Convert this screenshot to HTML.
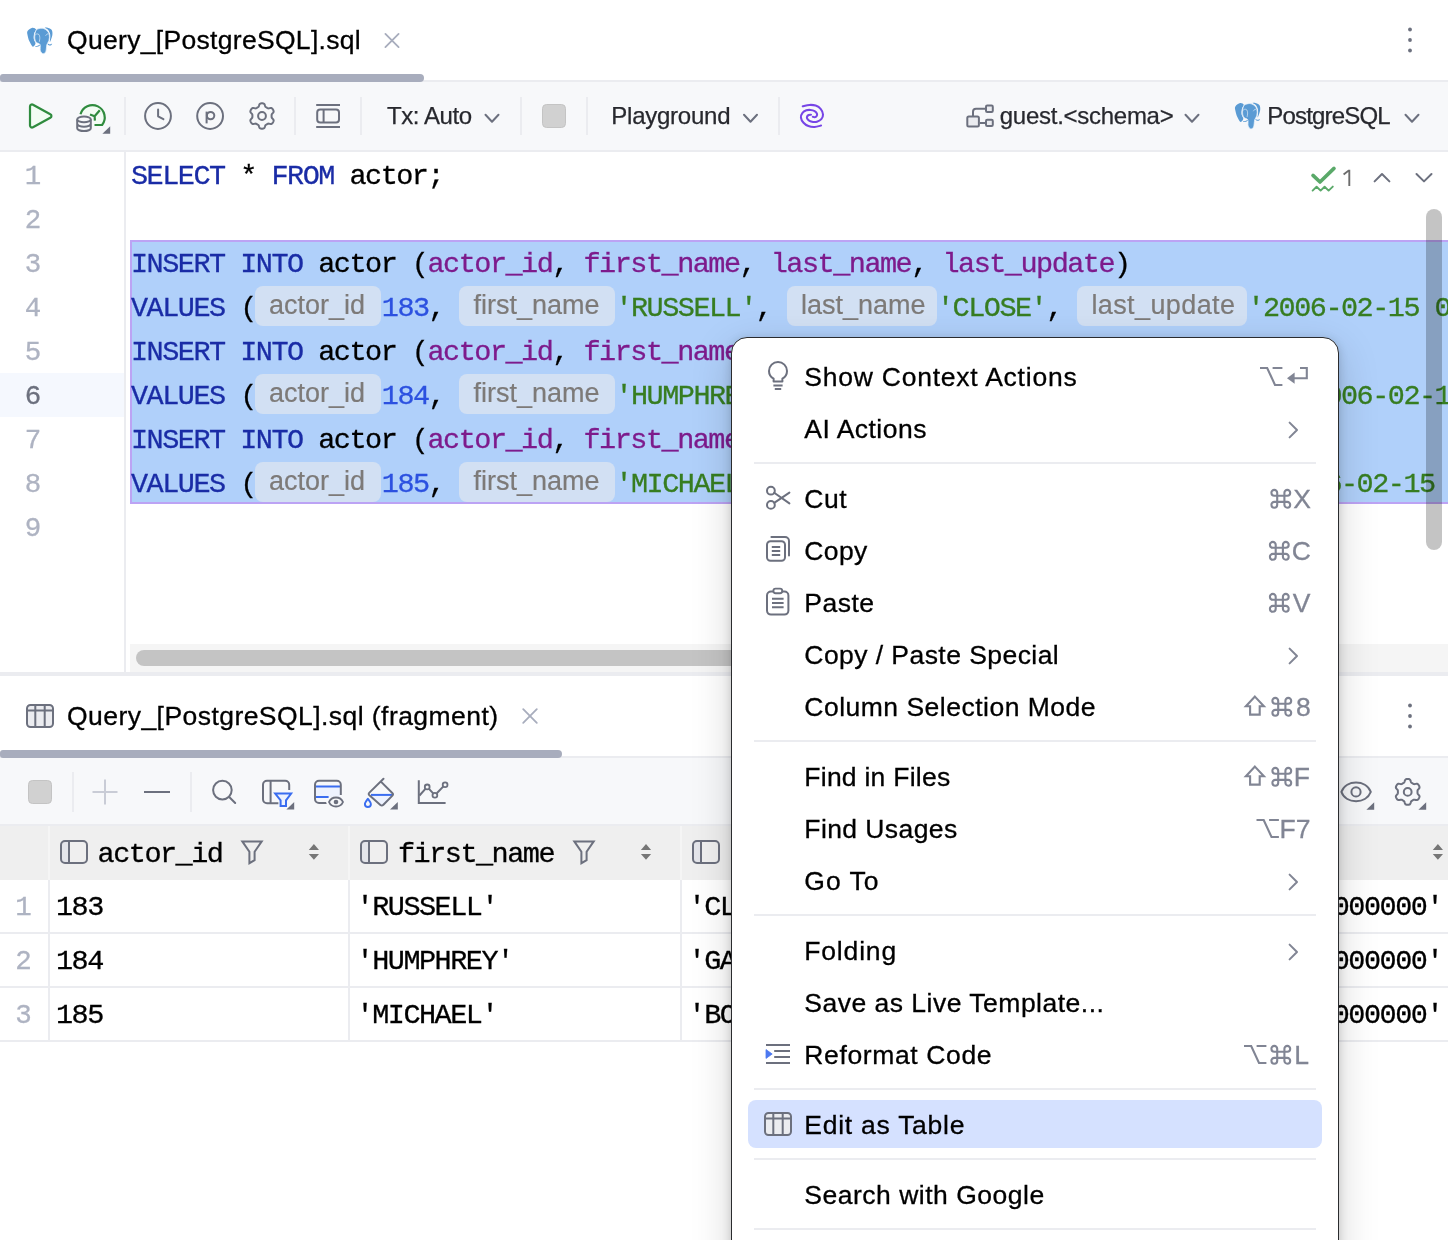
<!DOCTYPE html>
<html>
<head>
<meta charset="utf-8">
<title>Query_[PostgreSQL].sql</title>
<style>
*{box-sizing:border-box;margin:0;padding:0}
html,body{width:1448px;height:1240px;overflow:hidden;background:#fff}
body{position:relative;font-family:"Liberation Sans",sans-serif;color:#000}
#root{position:absolute;left:0;top:0;width:1448px;height:1240px;overflow:hidden;will-change:transform;background:#fff}
.abs{position:absolute}
.ui{position:absolute;-webkit-text-stroke:.3px currentColor;font-family:"Liberation Sans",sans-serif;font-size:26.5px;line-height:30px;white-space:pre;color:#000}
.tb{position:absolute;-webkit-text-stroke:.25px currentColor;font-family:"Liberation Sans",sans-serif;font-size:24px;line-height:30px;white-space:pre;color:#27282e}
.mono{font-family:"Liberation Mono",monospace;font-size:28.5px;letter-spacing:-1.5px;white-space:pre;-webkit-text-stroke:.3px currentColor}
svg{position:absolute;overflow:visible}
.sepv{position:absolute;width:2px;background:#ebecf0}
/* editor */
.ln{position:absolute;left:0;width:56px;text-align:center;height:44px;line-height:44px;color:#aeb3c2}
.cl{position:absolute;left:131px;height:44px;line-height:44px;color:#000}
.k{color:#1a2ca6}.c{color:#7d1b8c}.s{color:#377d21}.n{color:#2c51e0}
.h{position:absolute;top:-1px;height:40px;border-radius:8px;background:#d2e0f3;color:#7d7a78;font-family:"Liberation Sans",sans-serif;font-size:27px;line-height:38px;letter-spacing:0;white-space:pre;-webkit-text-stroke:.2px currentColor}
.h span{position:absolute;left:14px;top:0}
.seg{position:absolute;top:0;height:44px;line-height:44px}
/* menu */
#menu{position:absolute;left:731px;top:337px;width:608px;height:940px;background:#fff;border:1px solid #2a2b2e;border-radius:16px;box-shadow:0 2px 10px rgba(0,0,0,.17),0 12px 40px rgba(0,0,0,.17)}
.mi{position:absolute;left:72.3px;height:52px;line-height:52px;font-size:26.5px;-webkit-text-stroke:.3px currentColor;white-space:pre;color:#000}
.msep{position:absolute;left:22px;width:562px;height:2px;background:#ebecf0}
/* table */
.th{position:absolute;top:839px;height:32px;line-height:32px;color:#000}
.td{position:absolute;height:54px;line-height:54px;color:#000}
.rn{position:absolute;left:-1px;width:48px;text-align:center;height:54px;line-height:54px;color:#aeb3c2}
</style>
</head>
<body>
<div id="root">
<!-- ===== TAB BAR 1 ===== -->
<div class="abs" style="left:0;top:0;width:1448px;height:80px;background:#fff"></div>
<div class="abs" style="left:0;top:80px;width:1448px;height:2px;background:#ebecf0"></div>
<div class="abs" style="left:0;top:74px;width:424px;height:8px;background:#a8adbd;border-radius:3px 4px 4px 3px"></div>
<div class="ui" id="tab1" style="left:67.1px;top:25px;letter-spacing:0.304px">Query_[PostgreSQL].sql</div>
<!--ICONS-TAB1-->

<!-- ===== TOOLBAR 1 ===== -->
<div class="abs" style="left:0;top:82px;width:1448px;height:68px;background:#f7f8fa"></div>
<div class="abs" style="left:0;top:150px;width:1448px;height:2px;background:#ebecf0"></div>
<div class="sepv" style="left:124px;top:97px;height:38px"></div>
<div class="sepv" style="left:294px;top:97px;height:38px"></div>
<div class="sepv" style="left:360px;top:97px;height:38px"></div>
<div class="sepv" style="left:520px;top:97px;height:38px"></div>
<div class="sepv" style="left:586px;top:97px;height:38px"></div>
<div class="sepv" style="left:778px;top:97px;height:38px"></div>
<div class="tb" id="tx" style="left:387.0px;top:101px;letter-spacing:-0.43px">Tx: Auto</div>
<div class="tb" id="pg" style="left:611.3px;top:101px;letter-spacing:-0.244px">Playground</div>
<div class="tb" id="gs" style="left:999.8px;top:101px;letter-spacing:-0.273px">guest.&lt;schema&gt;</div>
<div class="tb" id="ps" style="left:1267.3px;top:101px;letter-spacing:-0.83px">PostgreSQL</div>

<!-- ===== EDITOR ===== -->
<div class="abs" style="left:0;top:152px;width:1448px;height:520px;background:#fff"></div>
<div class="abs" style="left:0;top:373px;width:124px;height:44px;background:#f5f8fe"></div>
<div class="abs" style="left:124px;top:152px;width:2px;height:520px;background:#ebecf0"></div>
<!-- selection -->
<div class="abs" style="left:130px;top:240px;width:1330px;height:264px;background:#b0d0fa;border:2px solid #bca3f4;border-right:none"></div>
<div class="ln mono" style="top:155px;left:4.5px;font-size:27.5px;letter-spacing:-.9px;color:#aeb3c2">1</div>
<div class="ln mono" style="top:199px;left:4.5px;font-size:27.5px;letter-spacing:-.9px;color:#aeb3c2">2</div>
<div class="ln mono" style="top:243px;left:4.5px;font-size:27.5px;letter-spacing:-.9px;color:#aeb3c2">3</div>
<div class="ln mono" style="top:287px;left:4.5px;font-size:27.5px;letter-spacing:-.9px;color:#aeb3c2">4</div>
<div class="ln mono" style="top:331px;left:4.5px;font-size:27.5px;letter-spacing:-.9px;color:#aeb3c2">5</div>
<div class="ln mono" style="top:375px;left:4.5px;font-size:27.5px;letter-spacing:-.9px;color:#6c707e">6</div>
<div class="ln mono" style="top:419px;left:4.5px;font-size:27.5px;letter-spacing:-.9px;color:#aeb3c2">7</div>
<div class="ln mono" style="top:463px;left:4.5px;font-size:27.5px;letter-spacing:-.9px;color:#aeb3c2">8</div>
<div class="ln mono" style="top:507px;left:4.5px;font-size:27.5px;letter-spacing:-.9px;color:#aeb3c2">9</div>
<div class="cl mono" style="top:155px"><span class="k">SELECT</span> * <span class="k">FROM</span> actor;</div>
<div class="cl mono" style="top:243px"><span class="k">INSERT INTO</span> actor (<span class="c">actor_id</span>, <span class="c">first_name</span>, <span class="c">last_name</span>, <span class="c">last_update</span>)</div>
<div class="cl mono" style="top:331px"><span class="k">INSERT INTO</span> actor (<span class="c">actor_id</span>, <span class="c">first_name</span>, <span class="c">last_name</span>, <span class="c">last_update</span>)</div>
<div class="cl mono" style="top:419px"><span class="k">INSERT INTO</span> actor (<span class="c">actor_id</span>, <span class="c">first_name</span>, <span class="c">last_name</span>, <span class="c">last_update</span>)</div>
<div class="cl mono" style="top:287px;width:1400px"><div class="seg" style="left:0.0px"><span class="k">VALUES</span> (</div><div class="h" style="left:124.0px;width:126px"><span>actor_id</span></div><div class="seg" style="left:250.8px"><span class="n">183</span>, </div><div class="h" style="left:328.4px;width:155.6px"><span>first_name</span></div><div class="seg" style="left:484.4px"><span class="s">'RUSSELL'</span>, </div><div class="h" style="left:656.0px;width:150px"><span>last_name</span></div><div class="seg" style="left:806.0px"><span class="s">'CLOSE'</span>, </div><div class="h" style="left:946.4px;width:170px"><span style="letter-spacing:.4px">last_update</span></div><div class="seg" style="left:1116.4px"><span class="s">'2006-02-15 04:34:33.000000'</span>);</div></div>
<div class="cl mono" style="top:375px;width:1400px"><div class="seg" style="left:0.0px"><span class="k">VALUES</span> (</div><div class="h" style="left:124.0px;width:126px"><span>actor_id</span></div><div class="seg" style="left:250.8px"><span class="n">184</span>, </div><div class="h" style="left:328.4px;width:155.6px"><span>first_name</span></div><div class="seg" style="left:484.4px"><span class="s">'HUMPHREY'</span>, </div><div class="h" style="left:671.6px;width:150px"><span>last_name</span></div><div class="seg" style="left:821.6px"><span class="s">'GARCIA'</span>, </div><div class="h" style="left:993.2px;width:170px"><span style="letter-spacing:.4px">last_update</span></div><div class="seg" style="left:1163.2px"><span class="s">'2006-02-15 04:34:33.000000'</span>);</div></div>
<div class="cl mono" style="top:463px;width:1400px"><div class="seg" style="left:0.0px"><span class="k">VALUES</span> (</div><div class="h" style="left:124.0px;width:126px"><span>actor_id</span></div><div class="seg" style="left:250.8px"><span class="n">185</span>, </div><div class="h" style="left:328.4px;width:155.6px"><span>first_name</span></div><div class="seg" style="left:484.4px"><span class="s">'MICHAEL'</span>, </div><div class="h" style="left:656.0px;width:150px"><span>last_name</span></div><div class="seg" style="left:806.0px"><span class="s">'BOLGER'</span>, </div><div class="h" style="left:962.0px;width:170px"><span style="letter-spacing:.4px">last_update</span></div><div class="seg" style="left:1132.0px"><span class="s">'2006-02-15 04:34:33.000000'</span>);</div></div>

<!-- h scrollbar -->
<div class="abs" style="left:130px;top:644px;width:1318px;height:28px;background:#f5f5f5"></div>
<div class="abs" style="left:136px;top:650px;width:900px;height:16px;background:#c4c4c4;border-radius:8px"></div>
<!-- v scrollbar -->
<div class="abs" style="left:1426px;top:209px;width:16px;height:341px;background:rgba(0,0,0,.23);border-radius:8px"></div>

<!-- ===== SPLIT + TAB BAR 2 ===== -->
<div class="abs" style="left:0;top:672px;width:1448px;height:4px;background:#ebecf0"></div>
<div class="abs" style="left:0;top:676px;width:1448px;height:80px;background:#fff"></div>
<div class="abs" style="left:0;top:756px;width:1448px;height:2px;background:#ebecf0"></div>
<div class="abs" style="left:0;top:750px;width:562px;height:8px;background:#a8adbd;border-radius:3px 4px 4px 3px"></div>
<div class="ui" id="tab2" style="left:67.0px;top:701px;letter-spacing:0.446px">Query_[PostgreSQL].sql (fragment)</div>
<!--ICONS-TAB2-->

<!-- ===== TOOLBAR 2 ===== -->
<div class="abs" style="left:0;top:758px;width:1448px;height:66px;background:#f7f8fa"></div>
<div class="abs" style="left:0;top:824px;width:1448px;height:2px;background:#ebecf0"></div>
<div class="sepv" style="left:72px;top:772px;height:40px"></div>
<div class="sepv" style="left:190px;top:772px;height:40px"></div>
<!--ICONS-TB2-->

<!-- ===== TABLE ===== -->
<div class="abs" style="left:0;top:826px;width:1448px;height:54px;background:#efefef"></div>
<div class="abs" style="left:0;top:880px;width:1448px;height:360px;background:#fff"></div>
<div class="abs" style="left:0;top:932px;width:1448px;height:2px;background:#ebecf0"></div>
<div class="abs" style="left:0;top:986px;width:1448px;height:2px;background:#ebecf0"></div>
<div class="abs" style="left:0;top:1040px;width:1448px;height:2px;background:#ebecf0"></div>
<div class="abs" style="left:48px;top:826px;width:2px;height:54px;background:#f5f5f5"></div>
<div class="abs" style="left:348px;top:826px;width:2px;height:54px;background:#f5f5f5"></div>
<div class="abs" style="left:680px;top:826px;width:2px;height:54px;background:#f5f5f5"></div>
<div class="abs" style="left:48px;top:880px;width:2px;height:162px;background:#ebecf0"></div>
<div class="abs" style="left:348px;top:880px;width:2px;height:162px;background:#ebecf0"></div>
<div class="abs" style="left:680px;top:880px;width:2px;height:162px;background:#ebecf0"></div>
<div class="th mono" style="left:97.6px">actor_id</div>
<div class="th mono" style="left:398px">first_name</div>
<div class="th mono" style="left:730px">last_name</div>
<div class="rn mono" style="top:881px;font-size:27.5px;letter-spacing:-.9px">1</div>
<div class="td mono" style="left:56px;top:881px">183</div>
<div class="td mono" style="left:356.6px;top:881px">'RUSSELL'</div>
<div class="td mono" style="left:688.6px;top:881px">'CLOSE'</div>
<div class="td mono" style="right:6px;top:881px">'2006-02-15 04:34:33.000000'</div>
<div class="rn mono" style="top:935px;font-size:27.5px;letter-spacing:-.9px">2</div>
<div class="td mono" style="left:56px;top:935px">184</div>
<div class="td mono" style="left:356.6px;top:935px">'HUMPHREY'</div>
<div class="td mono" style="left:688.6px;top:935px">'GARCIA'</div>
<div class="td mono" style="right:6px;top:935px">'2006-02-15 04:34:33.000000'</div>
<div class="rn mono" style="top:989px;font-size:27.5px;letter-spacing:-.9px">3</div>
<div class="td mono" style="left:56px;top:989px">185</div>
<div class="td mono" style="left:356.6px;top:989px">'MICHAEL'</div>
<div class="td mono" style="left:688.6px;top:989px">'BOLGER'</div>
<div class="td mono" style="right:6px;top:989px">'2006-02-15 04:34:33.000000'</div>
<!--ICONS-START--><svg id="icons" width="1448" height="1240" viewBox="0 0 1448 1240" style="left:0;top:0">
<g transform="translate(27.6,27.6)">
<path d="M4.79 0.21 C3.38 0.47 0.76 2.26 -0.04 3.50 C-0.85 4.73 -0.33 5.97 -0.04 7.64 C0.25 9.31 0.82 11.61 1.69 13.51 C2.55 15.41 4.10 18.63 5.14 19.03 C6.17 19.44 7.73 17.19 7.90 15.93 C8.07 14.66 6.40 13.11 6.17 11.44 C5.94 9.77 6.15 7.49 6.52 5.91 C6.89 4.33 8.71 2.89 8.42 1.94 C8.13 0.99 6.20 -0.04 4.79 0.21Z" fill="#5a9bd4"/>
<path d="M17.22 0.11 C17.28 -0.18 19.53 -0.00 20.68 0.39 C21.83 0.78 23.44 1.42 24.13 2.46 C24.82 3.50 24.91 5.11 24.82 6.60 C24.73 8.10 24.04 10.11 23.61 11.44 C23.18 12.76 22.39 14.89 22.23 14.54 C22.08 14.20 22.66 10.80 22.68 9.37 C22.70 7.93 22.73 7.12 22.33 5.91 C21.94 4.70 21.18 3.08 20.33 2.11 C19.48 1.15 17.17 0.40 17.22 0.11Z" fill="#5a9bd4"/>
<path d="M13.08 0.73 C11.93 0.93 9.92 1.14 8.94 2.11 C7.96 3.09 7.56 5.05 7.21 6.60 C6.87 8.16 6.58 10.06 6.87 11.44 C7.15 12.82 8.02 13.97 8.94 14.89 C9.86 15.81 11.76 15.58 12.39 16.96 C13.02 18.34 12.22 21.65 12.74 23.18 C13.25 24.70 14.58 26.00 15.50 26.11 C16.42 26.23 17.63 25.39 18.26 23.87 C18.89 22.34 18.78 18.80 19.30 16.96 C19.81 15.12 20.97 14.49 21.37 12.82 C21.77 11.15 22.06 8.62 21.71 6.95 C21.37 5.28 20.27 3.81 19.30 2.80 C18.32 1.80 16.88 1.25 15.84 0.91 C14.81 0.56 14.23 0.53 13.08 0.73Z" fill="#5a9bd4" stroke="#e9f2fb" stroke-width="0.8"/>
<path d="M7.73 18.52 C8.04 18.34 9.27 18.31 9.97 18.07 C10.68 17.82 11.60 17.07 11.98 17.03 C12.35 16.99 12.49 17.50 12.22 17.83 C11.94 18.15 11.01 18.75 10.32 18.96 C9.63 19.18 8.51 19.18 8.07 19.10 C7.64 19.03 7.41 18.69 7.73 18.52Z" fill="#5a9bd4"/>
<path d="M20.26 16.00 C20.57 15.97 21.52 16.85 22.23 16.89 C22.94 16.94 24.31 16.16 24.54 16.27 C24.77 16.39 24.06 17.31 23.61 17.58 C23.17 17.86 22.42 18.02 21.89 17.93 C21.35 17.84 20.67 17.35 20.40 17.03 C20.13 16.71 19.96 16.02 20.26 16.00Z" fill="#5a9bd4"/>
<path d="M7.56 13.51 C7.50 12.65 6.98 9.51 7.21 8.33 C7.44 7.15 8.25 6.66 8.94 6.43 C9.63 6.20 10.81 6.34 11.35 6.95 C11.90 7.55 12.16 8.85 12.22 10.06 C12.27 11.26 11.79 13.51 11.70 14.20" fill="none" stroke="#dbe9f7" stroke-width="0.7"/>
<path d="M17.91 8.33 C18.20 7.98 19.15 6.43 19.64 6.26 C20.13 6.08 20.65 7.12 20.85 7.29" fill="none" stroke="#dbe9f7" stroke-width="0.7"/>
</g>
<path d="M385.4 33.9 L398.6 47.1 M398.6 33.9 L385.4 47.1" stroke="#a8adbd" stroke-width="1.8" stroke-linecap="round" fill="none"/>
<circle cx="1410" cy="29.5" r="1.9" fill="#6c707e"/><circle cx="1410" cy="40" r="1.9" fill="#6c707e"/><circle cx="1410" cy="50.5" r="1.9" fill="#6c707e"/>
<path d="M30 106.4 A2 2 0 0 1 33 104.7 L50.3 114.2 A2 2 0 0 1 50.3 117.8 L33 127.3 A2 2 0 0 1 30 125.6 Z" fill="#f2fcf3" stroke="#2f8b3e" stroke-width="2.2" stroke-linejoin="round"/>
<path d="M80.5 114.3 A12.3 12.3 0 1 1 102.07 125 H94.5 V116 Z" fill="#f2fcf3"/>
<path d="M80.5 114.3 A12.3 12.3 0 1 1 102.07 125 H94.5" fill="none" stroke="#2f8b3e" stroke-width="2.2" stroke-linecap="butt"/>
<path d="M99.8 110.3 L94.6 116.2 M90 114.4 L94.6 116.2 L94.9 120.6" fill="none" stroke="#2f8b3e" stroke-width="2.2" stroke-linecap="butt"/>
<path d="M75.2 119 v10 a8.8 4.2 0 0 0 17.6 0 v-10 a8.8 4.2 0 0 0 -17.6 0z" fill="#f7f8fa"/>
<ellipse cx="84" cy="119.4" rx="6.8" ry="2.9" fill="#f7f8fa" stroke="#6c707e" stroke-width="2"/><path d="M77.2 119.4 V128.2 A6.8 2.9 0 0 0 90.8 128.2 V119.4 M77.2 123.8 A6.8 2.9 0 0 0 90.8 123.8" fill="none" stroke="#6c707e" stroke-width="2"/>
<path d="M110.2 133.8 h-7.8 l7.8 -7.6z" fill="#6c707e"/>
<circle cx="158" cy="116" r="12.9" fill="none" stroke="#6c707e" stroke-width="2"/><path d="M158.1 109.6 V116.3 L163.4 119.2" fill="none" stroke="#6c707e" stroke-width="2" stroke-linecap="round" stroke-linejoin="round"/>
<circle cx="210.1" cy="116" r="12.9" fill="none" stroke="#6c707e" stroke-width="2"/><circle cx="210.6" cy="115.6" r="3.7" fill="none" stroke="#6c707e" stroke-width="2"/><path d="M206.6 111.6 V123.4" stroke="#6c707e" stroke-width="2" stroke-linecap="butt"/>
<path d="M271.60 116.00 L271.60 116.42 L271.60 116.84 L271.64 117.27 L271.77 117.72 L272.14 118.25 L272.77 118.89 L273.36 119.58 L273.63 120.23 L273.62 120.81 L273.47 121.35 L273.26 121.86 L273.00 122.35 L272.70 122.82 L272.37 123.26 L271.98 123.66 L271.48 123.95 L270.78 124.05 L269.88 123.88 L269.02 123.66 L268.38 123.60 L267.92 123.71 L267.53 123.90 L267.16 124.10 L266.80 124.31 L266.44 124.52 L266.07 124.74 L265.72 124.98 L265.39 125.33 L265.12 125.90 L264.89 126.77 L264.58 127.63 L264.15 128.19 L263.64 128.47 L263.10 128.61 L262.55 128.68 L262.00 128.70 L261.45 128.68 L260.90 128.61 L260.36 128.47 L259.85 128.19 L259.42 127.63 L259.11 126.77 L258.88 125.90 L258.61 125.33 L258.28 124.98 L257.93 124.74 L257.56 124.52 L257.20 124.31 L256.84 124.10 L256.47 123.90 L256.08 123.71 L255.62 123.60 L254.98 123.66 L254.12 123.88 L253.22 124.05 L252.52 123.95 L252.02 123.66 L251.63 123.26 L251.30 122.82 L251.00 122.35 L250.74 121.86 L250.53 121.35 L250.38 120.81 L250.37 120.23 L250.64 119.58 L251.23 118.89 L251.86 118.25 L252.23 117.72 L252.36 117.27 L252.40 116.84 L252.40 116.42 L252.40 116.00 L252.40 115.58 L252.40 115.16 L252.36 114.73 L252.23 114.28 L251.86 113.75 L251.23 113.11 L250.64 112.42 L250.37 111.77 L250.38 111.19 L250.53 110.65 L250.74 110.14 L251.00 109.65 L251.30 109.18 L251.63 108.74 L252.02 108.34 L252.52 108.05 L253.22 107.95 L254.12 108.12 L254.98 108.34 L255.62 108.40 L256.08 108.29 L256.47 108.10 L256.84 107.90 L257.20 107.69 L257.56 107.48 L257.93 107.26 L258.28 107.02 L258.61 106.67 L258.88 106.10 L259.11 105.23 L259.42 104.37 L259.85 103.81 L260.36 103.53 L260.90 103.39 L261.45 103.32 L262.00 103.30 L262.55 103.32 L263.10 103.39 L263.64 103.53 L264.15 103.81 L264.58 104.37 L264.89 105.23 L265.12 106.10 L265.39 106.67 L265.72 107.02 L266.07 107.26 L266.44 107.48 L266.80 107.69 L267.16 107.90 L267.53 108.10 L267.92 108.29 L268.38 108.40 L269.02 108.34 L269.88 108.12 L270.78 107.95 L271.48 108.05 L271.98 108.34 L272.37 108.74 L272.70 109.18 L273.00 109.65 L273.26 110.14 L273.47 110.65 L273.62 111.19 L273.63 111.77 L273.36 112.42 L272.77 113.11 L272.14 113.75 L271.77 114.28 L271.64 114.73 L271.60 115.16 L271.60 115.58Z" fill="none" stroke="#6c707e" stroke-width="2" stroke-linejoin="round"/><circle cx="262" cy="116" r="3.9" fill="none" stroke="#6c707e" stroke-width="2"/>
<path d="M316.2 105 H340 M316.2 126.9 H340" stroke="#6c707e" stroke-width="2"/><rect x="317.2" y="109.4" width="21.8" height="13.2" rx="3" fill="none" stroke="#6c707e" stroke-width="2"/><path d="M323.6 109.4 V122.6" stroke="#6c707e" stroke-width="2"/>
<path d="M485.5 114.7 L492 121.7 L498.5 114.7" fill="none" stroke="#6c707e" stroke-width="2" stroke-linecap="round" stroke-linejoin="round"/>
<rect x="542.5" y="104.5" width="23" height="23" rx="4" fill="#d1d1d1" stroke="#c4c4c4" stroke-width="1"/>
<path d="M744.0 114.7 L750.5 121.7 L757.0 114.7" fill="none" stroke="#6c707e" stroke-width="2" stroke-linecap="round" stroke-linejoin="round"/>
<path d="M802.74 106.20 C803.86 105.98 807.30 105.01 809.46 104.90 C811.61 104.80 813.76 104.86 815.65 105.55 C817.54 106.24 819.59 107.55 820.81 109.03 C822.04 110.52 822.92 112.78 823.01 114.46 C823.09 116.13 822.34 117.90 821.33 119.10 C820.32 120.31 818.32 121.21 816.94 121.68 C815.56 122.16 814.32 122.07 813.07 121.94 C811.82 121.81 810.44 121.47 809.46 120.91 C808.47 120.35 807.52 119.32 807.13 118.59 C806.74 117.85 806.87 117.12 807.13 116.52 C807.39 115.92 808.04 115.27 808.68 114.97 C809.33 114.67 810.62 114.76 811.00 114.71" fill="none" stroke="#7745e6" stroke-width="2.05" stroke-linecap="round" stroke-linejoin="round"/><path d="M821.07 125.55 C820.00 125.79 816.73 126.89 814.62 126.97 C812.51 127.06 810.27 126.78 808.42 126.07 C806.57 125.36 804.77 124.14 803.52 122.72 C802.27 121.30 801.11 119.19 800.94 117.55 C800.76 115.92 801.58 114.11 802.49 112.91 C803.39 111.70 805.02 110.82 806.36 110.33 C807.69 109.83 809.11 109.81 810.49 109.94 C811.86 110.07 813.54 110.48 814.62 111.10 C815.69 111.72 816.60 112.86 816.94 113.68 C817.29 114.50 817.07 115.40 816.68 116.00 C816.30 116.61 815.26 117.17 814.62 117.29 C813.97 117.42 813.11 116.86 812.81 116.78" fill="none" stroke="#7745e6" stroke-width="2.05" stroke-linecap="round" stroke-linejoin="round"/>
<path d="M985 108.8 H976 a3 3 0 0 0 -3 3 V116 M980 123 H985" fill="none" stroke="#6c707e" stroke-width="2"/>
<rect x="967.3" y="116.5" width="11.6" height="10" rx="1.5" fill="#ebecf0" stroke="#6c707e" stroke-width="2"/><rect x="986" y="105.6" width="6.8" height="6.4" rx="1.2" fill="#ebecf0" stroke="#6c707e" stroke-width="2"/><rect x="986" y="119.8" width="6.8" height="6.2" rx="1.2" fill="#ebecf0" stroke="#6c707e" stroke-width="2"/>
<path d="M1185.5 114.7 L1192 121.7 L1198.5 114.7" fill="none" stroke="#6c707e" stroke-width="2" stroke-linecap="round" stroke-linejoin="round"/>
<g transform="translate(1235.4,102.9)">
<path d="M4.79 0.21 C3.38 0.47 0.76 2.26 -0.04 3.50 C-0.85 4.73 -0.33 5.97 -0.04 7.64 C0.25 9.31 0.82 11.61 1.69 13.51 C2.55 15.41 4.10 18.63 5.14 19.03 C6.17 19.44 7.73 17.19 7.90 15.93 C8.07 14.66 6.40 13.11 6.17 11.44 C5.94 9.77 6.15 7.49 6.52 5.91 C6.89 4.33 8.71 2.89 8.42 1.94 C8.13 0.99 6.20 -0.04 4.79 0.21Z" fill="#5a9bd4"/>
<path d="M17.22 0.11 C17.28 -0.18 19.53 -0.00 20.68 0.39 C21.83 0.78 23.44 1.42 24.13 2.46 C24.82 3.50 24.91 5.11 24.82 6.60 C24.73 8.10 24.04 10.11 23.61 11.44 C23.18 12.76 22.39 14.89 22.23 14.54 C22.08 14.20 22.66 10.80 22.68 9.37 C22.70 7.93 22.73 7.12 22.33 5.91 C21.94 4.70 21.18 3.08 20.33 2.11 C19.48 1.15 17.17 0.40 17.22 0.11Z" fill="#5a9bd4"/>
<path d="M13.08 0.73 C11.93 0.93 9.92 1.14 8.94 2.11 C7.96 3.09 7.56 5.05 7.21 6.60 C6.87 8.16 6.58 10.06 6.87 11.44 C7.15 12.82 8.02 13.97 8.94 14.89 C9.86 15.81 11.76 15.58 12.39 16.96 C13.02 18.34 12.22 21.65 12.74 23.18 C13.25 24.70 14.58 26.00 15.50 26.11 C16.42 26.23 17.63 25.39 18.26 23.87 C18.89 22.34 18.78 18.80 19.30 16.96 C19.81 15.12 20.97 14.49 21.37 12.82 C21.77 11.15 22.06 8.62 21.71 6.95 C21.37 5.28 20.27 3.81 19.30 2.80 C18.32 1.80 16.88 1.25 15.84 0.91 C14.81 0.56 14.23 0.53 13.08 0.73Z" fill="#5a9bd4" stroke="#e9f2fb" stroke-width="0.8"/>
<path d="M7.73 18.52 C8.04 18.34 9.27 18.31 9.97 18.07 C10.68 17.82 11.60 17.07 11.98 17.03 C12.35 16.99 12.49 17.50 12.22 17.83 C11.94 18.15 11.01 18.75 10.32 18.96 C9.63 19.18 8.51 19.18 8.07 19.10 C7.64 19.03 7.41 18.69 7.73 18.52Z" fill="#5a9bd4"/>
<path d="M20.26 16.00 C20.57 15.97 21.52 16.85 22.23 16.89 C22.94 16.94 24.31 16.16 24.54 16.27 C24.77 16.39 24.06 17.31 23.61 17.58 C23.17 17.86 22.42 18.02 21.89 17.93 C21.35 17.84 20.67 17.35 20.40 17.03 C20.13 16.71 19.96 16.02 20.26 16.00Z" fill="#5a9bd4"/>
<path d="M7.56 13.51 C7.50 12.65 6.98 9.51 7.21 8.33 C7.44 7.15 8.25 6.66 8.94 6.43 C9.63 6.20 10.81 6.34 11.35 6.95 C11.90 7.55 12.16 8.85 12.22 10.06 C12.27 11.26 11.79 13.51 11.70 14.20" fill="none" stroke="#dbe9f7" stroke-width="0.7"/>
<path d="M17.91 8.33 C18.20 7.98 19.15 6.43 19.64 6.26 C20.13 6.08 20.65 7.12 20.85 7.29" fill="none" stroke="#dbe9f7" stroke-width="0.7"/>
</g>
<path d="M1405.5 114.7 L1412 121.7 L1418.5 114.7" fill="none" stroke="#6c707e" stroke-width="2" stroke-linecap="round" stroke-linejoin="round"/>
<path d="M1313 175.4 L1320 182 L1334 168.4" fill="none" stroke="#5aa969" stroke-width="3.6" stroke-linecap="round" stroke-linejoin="round"/>
<path d="M1312.6 190.6 L1316.6 186.8 L1320.6 190.6 L1324.6 186.8 L1328.6 190.6 L1332.8 186.6" fill="none" stroke="#5aa969" stroke-width="1.9" stroke-linecap="round" stroke-linejoin="round"/>
<path d="M1374.6 181.4 L1382 174 L1389.4 181.4" fill="none" stroke="#6c707e" stroke-width="2" stroke-linecap="round" stroke-linejoin="round"/>
<path d="M1416.5 174 L1424 181.4 L1431.5 174" fill="none" stroke="#6c707e" stroke-width="2" stroke-linecap="round" stroke-linejoin="round"/>
<path d="M1343.6 174.6 L1348.6 170.6 H1349.3 V186" fill="none" stroke="#6c6c6c" stroke-width="1.9" stroke-linejoin="miter"/>
<rect x="27" y="705" width="26" height="22" rx="3.5" fill="#ebecf0" stroke="#6c707e" stroke-width="2"/><path d="M27 710.5 H53 M35.3 705 V727 M44.7 705 V727" stroke="#6c707e" stroke-width="2" fill="none"/>
<path d="M523.2 709.2 L536.8 722.8 M536.8 709.2 L523.2 722.8" stroke="#a8adbd" stroke-width="1.8" stroke-linecap="round" fill="none"/>
<circle cx="1410" cy="705.5" r="1.9" fill="#6c707e"/><circle cx="1410" cy="716" r="1.9" fill="#6c707e"/><circle cx="1410" cy="726.5" r="1.9" fill="#6c707e"/>
<rect x="28.5" y="780.5" width="23" height="23" rx="4" fill="#d1d1d1" stroke="#c4c4c4" stroke-width="1"/>
<path d="M92.5 792 H117.5 M105 779.5 V804.5" stroke="#c9ccd6" stroke-width="2"/>
<path d="M144 792 H170" stroke="#6c707e" stroke-width="2"/>
<circle cx="222.4" cy="790.1" r="9.3" fill="none" stroke="#6c707e" stroke-width="2"/><path d="M229.2 797 L235.2 803" stroke="#6c707e" stroke-width="2" stroke-linecap="round"/>
<path d="M289.2 790 V784.8 A4 4 0 0 0 285.2 780.8 H267 A4 4 0 0 0 263 784.8 V799.2 A4 4 0 0 0 267 803.2 H278.4 M270.6 780.8 V803.2" fill="none" stroke="#6c707e" stroke-width="2"/>
<path d="M275.2 793.6 H291.1 L286 800.3 V806 H280.6 V800.3 Z" fill="#edf2fe" stroke="#3a6df0" stroke-width="2" stroke-linejoin="miter"/>
<path d="M294.2 809.6 h-7.8 l7.8 -7.6z" fill="#6c707e"/>
<rect x="316" y="786.6" width="24" height="10.5" fill="#edf2fe"/>
<path d="M316 786.6 H340 M316 797.1 H328.6" stroke="#3a6df0" stroke-width="2"/>
<path d="M340.8 795 V784.8 A4 4 0 0 0 336.8 780.8 H319 A4 4 0 0 0 315 784.8 V799 A4 4 0 0 0 319 803 H326.6" fill="none" stroke="#6c707e" stroke-width="2"/>
<path d="M326 802 C330 794.6 342 794.6 346 802 C342 809.4 330 809.4 326 802Z" fill="#f7f8fa"/>
<path d="M329 802 C331.6 795.9 340.4 795.9 343 802 C340.4 808.1 331.6 808.1 329 802Z" fill="#f7f8fa" stroke="#6c707e" stroke-width="1.9" stroke-linejoin="round"/><circle cx="336" cy="802" r="2.3" fill="#6c707e"/>
<path d="M370.6 794.9 H392 L383.4 804.2 Q381.9 805.6 380.4 804.3 Z" fill="#edf2fe"/>
<path d="M371 794.9 H392.3" stroke="#3a6df0" stroke-width="2"/>
<path d="M383.5 778.8 L369.4 792.6 Q368 794 369.4 795.3 L380.4 805 Q381.9 806.2 383.4 804.8 L392.4 795.6 Q393.6 794.3 392.3 793 L380.9 781.6" fill="none" stroke="#6c707e" stroke-width="2" stroke-linecap="round" stroke-linejoin="round"/>
<path d="M367.9 798.7 C366.2 801 364.9 802.6 364.9 804 A3 3 0 0 0 370.9 804 C370.9 802.6 369.6 801 367.9 798.7Z" fill="none" stroke="#3a6df0" stroke-width="1.9" stroke-linejoin="round"/>
<path d="M397.8 809.6 h-7.8 l7.8 -7.6z" fill="#6c707e"/>
<path d="M418.8 780.3 V803 H445.6" fill="none" stroke="#6c707e" stroke-width="2"/><path d="M419.5 795.5 L425.6 788.6 M429 788.8 L433.2 793.4 M436.8 793.2 L443.4 786.4" stroke="#6c707e" stroke-width="2"/><circle cx="427.2" cy="786.9" r="2.4" fill="none" stroke="#6c707e" stroke-width="1.8"/><circle cx="434.9" cy="795.2" r="2.4" fill="none" stroke="#6c707e" stroke-width="1.8"/><circle cx="445.1" cy="784.8" r="2.4" fill="none" stroke="#6c707e" stroke-width="1.8"/>
<path d="M1341.4 791.9 C1346 779.4 1366 779.4 1370.8 791.9 C1366 804.4 1346 804.4 1341.4 791.9Z" fill="none" stroke="#6c707e" stroke-width="2" stroke-linejoin="round"/><circle cx="1356" cy="791.9" r="4.6" fill="none" stroke="#6c707e" stroke-width="2"/>
<path d="M1374.2 809.8 h-7.8 l7.8 -7.6z" fill="#6c707e"/>
<path d="M1417.50 791.90 L1417.50 792.33 L1417.50 792.76 L1417.54 793.20 L1417.67 793.66 L1418.03 794.19 L1418.66 794.84 L1419.25 795.54 L1419.52 796.20 L1419.51 796.79 L1419.36 797.33 L1419.14 797.85 L1418.87 798.35 L1418.57 798.83 L1418.23 799.28 L1417.84 799.68 L1417.33 799.98 L1416.63 800.08 L1415.73 799.93 L1414.85 799.70 L1414.21 799.66 L1413.74 799.77 L1413.34 799.96 L1412.97 800.17 L1412.60 800.39 L1412.23 800.60 L1411.86 800.82 L1411.50 801.07 L1411.16 801.41 L1410.88 801.99 L1410.64 802.86 L1410.32 803.73 L1409.88 804.28 L1409.37 804.57 L1408.82 804.71 L1408.26 804.78 L1407.70 804.80 L1407.14 804.78 L1406.58 804.71 L1406.03 804.57 L1405.52 804.28 L1405.08 803.73 L1404.76 802.86 L1404.52 801.99 L1404.24 801.41 L1403.90 801.07 L1403.54 800.82 L1403.17 800.60 L1402.80 800.39 L1402.43 800.17 L1402.06 799.96 L1401.66 799.77 L1401.19 799.66 L1400.55 799.70 L1399.67 799.93 L1398.77 800.08 L1398.07 799.98 L1397.56 799.68 L1397.17 799.28 L1396.83 798.83 L1396.53 798.35 L1396.26 797.85 L1396.04 797.33 L1395.89 796.79 L1395.88 796.20 L1396.15 795.54 L1396.74 794.84 L1397.37 794.19 L1397.73 793.66 L1397.86 793.20 L1397.90 792.76 L1397.90 792.33 L1397.90 791.90 L1397.90 791.47 L1397.90 791.04 L1397.86 790.60 L1397.73 790.14 L1397.37 789.61 L1396.74 788.96 L1396.15 788.26 L1395.88 787.60 L1395.89 787.01 L1396.04 786.47 L1396.26 785.95 L1396.53 785.45 L1396.83 784.97 L1397.17 784.52 L1397.56 784.12 L1398.07 783.82 L1398.77 783.72 L1399.67 783.87 L1400.55 784.10 L1401.19 784.14 L1401.66 784.03 L1402.06 783.84 L1402.43 783.63 L1402.80 783.41 L1403.17 783.20 L1403.54 782.98 L1403.90 782.73 L1404.24 782.39 L1404.52 781.81 L1404.76 780.94 L1405.08 780.07 L1405.52 779.52 L1406.03 779.23 L1406.58 779.09 L1407.14 779.02 L1407.70 779.00 L1408.26 779.02 L1408.82 779.09 L1409.37 779.23 L1409.88 779.52 L1410.32 780.07 L1410.64 780.94 L1410.88 781.81 L1411.16 782.39 L1411.50 782.73 L1411.86 782.98 L1412.23 783.20 L1412.60 783.41 L1412.97 783.63 L1413.34 783.84 L1413.74 784.03 L1414.21 784.14 L1414.85 784.10 L1415.73 783.87 L1416.63 783.72 L1417.33 783.82 L1417.84 784.12 L1418.23 784.52 L1418.57 784.97 L1418.87 785.45 L1419.14 785.95 L1419.36 786.47 L1419.51 787.01 L1419.52 787.60 L1419.25 788.26 L1418.66 788.96 L1418.03 789.61 L1417.67 790.14 L1417.54 790.60 L1417.50 791.04 L1417.50 791.47Z" fill="none" stroke="#6c707e" stroke-width="2" stroke-linejoin="round"/><circle cx="1407.7" cy="791.9" r="3.9" fill="none" stroke="#6c707e" stroke-width="2"/>
<path d="M1426.2 809.8 h-7.8 l7.8 -7.6z" fill="#6c707e"/>
<path d="M61 845 a4 4 0 0 1 4 -4 h4 v22 h-4 a4 4 0 0 1 -4 -4z" fill="#e4e5ea"/><rect x="61" y="841" width="26" height="22" rx="4" fill="none" stroke="#6c707e" stroke-width="2"/><path d="M69 841 V863" stroke="#6c707e" stroke-width="2"/>
<path d="M242.3 841.4 H261.7 L254.6 851.8 V860.1999999999999 L249.4 863.1999999999999 V851.8 Z" fill="none" stroke="#6c707e" stroke-width="2" stroke-linejoin="miter"/>
<path d="M313.9 844.1 l5.1 5.8 h-10.2z M313.9 859.8000000000001 l5.1 -5.9 h-10.2z" fill="#767676"/>
<path d="M361 845 a4 4 0 0 1 4 -4 h4 v22 h-4 a4 4 0 0 1 -4 -4z" fill="#e4e5ea"/><rect x="361" y="841" width="26" height="22" rx="4" fill="none" stroke="#6c707e" stroke-width="2"/><path d="M369 841 V863" stroke="#6c707e" stroke-width="2"/>
<path d="M574.3 841.4 H593.7 L586.6 851.8 V860.1999999999999 L581.4 863.1999999999999 V851.8 Z" fill="none" stroke="#6c707e" stroke-width="2" stroke-linejoin="miter"/>
<path d="M646 844.1 l5.1 5.8 h-10.2z M646 859.8000000000001 l5.1 -5.9 h-10.2z" fill="#767676"/>
<path d="M693 845 a4 4 0 0 1 4 -4 h4 v22 h-4 a4 4 0 0 1 -4 -4z" fill="#e4e5ea"/><rect x="693" y="841" width="26" height="22" rx="4" fill="none" stroke="#6c707e" stroke-width="2"/><path d="M701 841 V863" stroke="#6c707e" stroke-width="2"/>
<path d="M1437.9 844.1 l5.1 5.8 h-10.2z M1437.9 859.8000000000001 l5.1 -5.9 h-10.2z" fill="#767676"/>
</svg><!--ICONS-END-->

<!-- ===== CONTEXT MENU ===== -->
<div id="menu">
<div class="abs" style="left:16px;top:762px;width:574px;height:48px;border-radius:8px;background:#d5e1ff"></div>
<div class="msep" style="top:124px"></div>
<div class="msep" style="top:402px"></div>
<div class="msep" style="top:576px"></div>
<div class="msep" style="top:750px"></div>
<div class="msep" style="top:820px"></div>
<div class="msep" style="top:890px"></div>
<div class="mi" style="top:13px;letter-spacing:0.767px">Show Context Actions</div>
<div class="mi" style="top:65px;letter-spacing:0.474px">AI Actions</div>
<div class="mi" style="top:135px;letter-spacing:0.516px">Cut</div>
<div class="mi" style="top:187px;letter-spacing:0.367px">Copy</div>
<div class="mi" style="top:239px;letter-spacing:0.5px">Paste</div>
<div class="mi" style="top:291px;letter-spacing:0.445px">Copy / Paste Special</div>
<div class="mi" style="top:343px;letter-spacing:0.493px">Column Selection Mode</div>
<div class="mi" style="top:413px;letter-spacing:0.252px">Find in Files</div>
<div class="mi" style="top:465px;letter-spacing:0.413px">Find Usages</div>
<div class="mi" style="top:517px;letter-spacing:0.998px">Go To</div>
<div class="mi" style="top:587px;letter-spacing:0.82px">Folding</div>
<div class="mi" style="top:639px;letter-spacing:0.494px">Save as Live Template...</div>
<div class="mi" style="top:691px;letter-spacing:0.633px">Reformat Code</div>
<div class="mi" style="top:761px;letter-spacing:0.742px">Edit as Table</div>
<div class="mi" style="top:831px;letter-spacing:0.505px">Search with Google</div>
<div class="mi sc" style="left:auto;right:27.0px;top:135px;color:#818594">X</div>
<div class="mi sc" style="left:auto;right:27.0px;top:187px;color:#818594">C</div>
<div class="mi sc" style="left:auto;right:27.5px;top:239px;color:#818594">V</div>
<div class="mi sc" style="left:auto;right:27.3px;top:343px;color:#818594">8</div>
<div class="mi sc" style="left:auto;right:28.0px;top:413px;color:#818594">F</div>
<div class="mi sc" style="left:auto;right:27.5px;top:465px;color:#818594">F7</div>
<div class="mi sc" style="left:auto;right:29.0px;top:691px;color:#818594">L</div>
<!--MI-START--><svg width="606" height="902" viewBox="732 338 606 902" style="left:0;top:0">
<path d="M773.6 381.6 V378.6 C770.6 377 769 374.2 769 371 A9 9 0 0 1 787 371 C787 374.2 785.4 377 782.4 378.6 V381.6 Z" fill="none" stroke="#6c707e" stroke-width="2" stroke-linejoin="round"/>
<path d="M773.4 385.4 H782.6 M774.8 389 H781.2" stroke="#6c707e" stroke-width="2" stroke-linecap="butt"/>
<circle cx="770.9" cy="490.7" r="3.9" fill="none" stroke="#6c707e" stroke-width="2"/><circle cx="770.9" cy="504.9" r="3.9" fill="none" stroke="#6c707e" stroke-width="2"/><path d="M774.2 492.8 L789.4 503.4 M774.2 502.8 L789.4 492.6" stroke="#6c707e" stroke-width="2" stroke-linecap="round"/>
<rect x="767" y="541.3" width="18" height="19.4" rx="3.5" fill="none" stroke="#6c707e" stroke-width="2"/><path d="M771.8 547 H780.2 M771.8 551 H780.2 M771.8 555 H780.2" stroke="#6c707e" stroke-width="1.9"/><path d="M771.4 537 H785 A4 4 0 0 1 789 541 V555.4" fill="none" stroke="#6c707e" stroke-width="2" stroke-linecap="round"/>
<rect x="767" y="591.6" width="21.4" height="23" rx="4" fill="none" stroke="#6c707e" stroke-width="2"/><rect x="773.4" y="588.6" width="8.8" height="4.6" rx="2.2" fill="#fff" stroke="#6c707e" stroke-width="1.9"/><path d="M772 598.8 H783.6 M772 603 H783.6 M772 607.2 H783.6" stroke="#6c707e" stroke-width="1.9"/>
<path d="M766 1045 H790 M774.2 1051 H790 M774.2 1057 H790 M766 1063 H790" stroke="#6c707e" stroke-width="2"/><path d="M766 1049.6 L772.2 1054 L766 1058.4Z" fill="#4c78f0" stroke="#4c78f0" stroke-width="0.8" stroke-linejoin="round"/>
<rect x="765" y="1113" width="26" height="22" rx="3.5" fill="#ebecf0" stroke="#6c707e" stroke-width="2"/><path d="M765 1118.5 H791 M773.3 1113 V1135 M782.7 1113 V1135" stroke="#6c707e" stroke-width="2" fill="none"/>
<path d="M1289.6 422.6 L1297 430 L1289.6 437.4" fill="none" stroke="#818594" stroke-width="2" stroke-linecap="round" stroke-linejoin="round"/>
<path d="M1289.6 648.6 L1297 656 L1289.6 663.4" fill="none" stroke="#818594" stroke-width="2" stroke-linecap="round" stroke-linejoin="round"/>
<path d="M1289.6 874.6 L1297 882 L1289.6 889.4" fill="none" stroke="#818594" stroke-width="2" stroke-linecap="round" stroke-linejoin="round"/>
<path d="M1289.6 944.6 L1297 952 L1289.6 959.4" fill="none" stroke="#818594" stroke-width="2" stroke-linecap="round" stroke-linejoin="round"/>
<path d="M1260 368.0 H1267.2 L1275 385.0 H1282.4 M1272.6 368.0 H1282.4" fill="none" stroke="#818594" stroke-width="2.1" stroke-linejoin="miter"/>
<path d="M1300 368.0 H1306.8 V378.2 H1294" fill="none" stroke="#818594" stroke-width="2.1"/><path d="M1287 378.2 L1294.6 372.59999999999997 V383.79999999999995Z" fill="#818594"/>
<g transform="translate(1268.8,486.8)"><path d="M8.4 8.9 H15.6 V15.1 H8.4 Z M8.4 8.9 V6 A2.9 2.9 0 1 0 5.5 8.9 H8.4 M15.6 8.9 H18.5 A2.9 2.9 0 1 0 15.6 6 V8.9 M15.6 15.1 V18 A2.9 2.9 0 1 0 18.5 15.1 H15.6 M8.4 15.1 H5.5 A2.9 2.9 0 1 0 8.4 18 V15.1" fill="none" stroke="#818594" stroke-width="2.1"/></g>
<g transform="translate(1267.3,538.8)"><path d="M8.4 8.9 H15.6 V15.1 H8.4 Z M8.4 8.9 V6 A2.9 2.9 0 1 0 5.5 8.9 H8.4 M15.6 8.9 H18.5 A2.9 2.9 0 1 0 15.6 6 V8.9 M15.6 15.1 V18 A2.9 2.9 0 1 0 18.5 15.1 H15.6 M8.4 15.1 H5.5 A2.9 2.9 0 1 0 8.4 18 V15.1" fill="none" stroke="#818594" stroke-width="2.1"/></g>
<g transform="translate(1267.3,590.8)"><path d="M8.4 8.9 H15.6 V15.1 H8.4 Z M8.4 8.9 V6 A2.9 2.9 0 1 0 5.5 8.9 H8.4 M15.6 8.9 H18.5 A2.9 2.9 0 1 0 15.6 6 V8.9 M15.6 15.1 V18 A2.9 2.9 0 1 0 18.5 15.1 H15.6 M8.4 15.1 H5.5 A2.9 2.9 0 1 0 8.4 18 V15.1" fill="none" stroke="#818594" stroke-width="2.1"/></g>
<path d="M1254.8999999999999 696.6 L1263.8999999999999 706.2 H1259.7 V714.6 H1250.1 V706.2 H1245.8999999999999 Z" fill="none" stroke="#818594" stroke-width="2.1" stroke-linejoin="miter"/>
<g transform="translate(1269.8,694.8)"><path d="M8.4 8.9 H15.6 V15.1 H8.4 Z M8.4 8.9 V6 A2.9 2.9 0 1 0 5.5 8.9 H8.4 M15.6 8.9 H18.5 A2.9 2.9 0 1 0 15.6 6 V8.9 M15.6 15.1 V18 A2.9 2.9 0 1 0 18.5 15.1 H15.6 M8.4 15.1 H5.5 A2.9 2.9 0 1 0 8.4 18 V15.1" fill="none" stroke="#818594" stroke-width="2.1"/></g>
<path d="M1254.8999999999999 766.6 L1263.8999999999999 776.2 H1259.7 V784.6 H1250.1 V776.2 H1245.8999999999999 Z" fill="none" stroke="#818594" stroke-width="2.1" stroke-linejoin="miter"/>
<g transform="translate(1269.8,764.8)"><path d="M8.4 8.9 H15.6 V15.1 H8.4 Z M8.4 8.9 V6 A2.9 2.9 0 1 0 5.5 8.9 H8.4 M15.6 8.9 H18.5 A2.9 2.9 0 1 0 15.6 6 V8.9 M15.6 15.1 V18 A2.9 2.9 0 1 0 18.5 15.1 H15.6 M8.4 15.1 H5.5 A2.9 2.9 0 1 0 8.4 18 V15.1" fill="none" stroke="#818594" stroke-width="2.1"/></g>
<path d="M1256.5 820.0 H1263.7 L1271.5 837.0 H1278.9 M1269.1 820.0 H1278.9" fill="none" stroke="#818594" stroke-width="2.1" stroke-linejoin="miter"/>
<path d="M1244 1046.0 H1251.2 L1259 1063.0 H1266.4 M1256.6 1046.0 H1266.4" fill="none" stroke="#818594" stroke-width="2.1" stroke-linejoin="miter"/>
<g transform="translate(1268.8,1042.8)"><path d="M8.4 8.9 H15.6 V15.1 H8.4 Z M8.4 8.9 V6 A2.9 2.9 0 1 0 5.5 8.9 H8.4 M15.6 8.9 H18.5 A2.9 2.9 0 1 0 15.6 6 V8.9 M15.6 15.1 V18 A2.9 2.9 0 1 0 18.5 15.1 H15.6 M8.4 15.1 H5.5 A2.9 2.9 0 1 0 8.4 18 V15.1" fill="none" stroke="#818594" stroke-width="2.1"/></g>
</svg><!--MI-END-->
</div>
</div>
</body>
</html>
